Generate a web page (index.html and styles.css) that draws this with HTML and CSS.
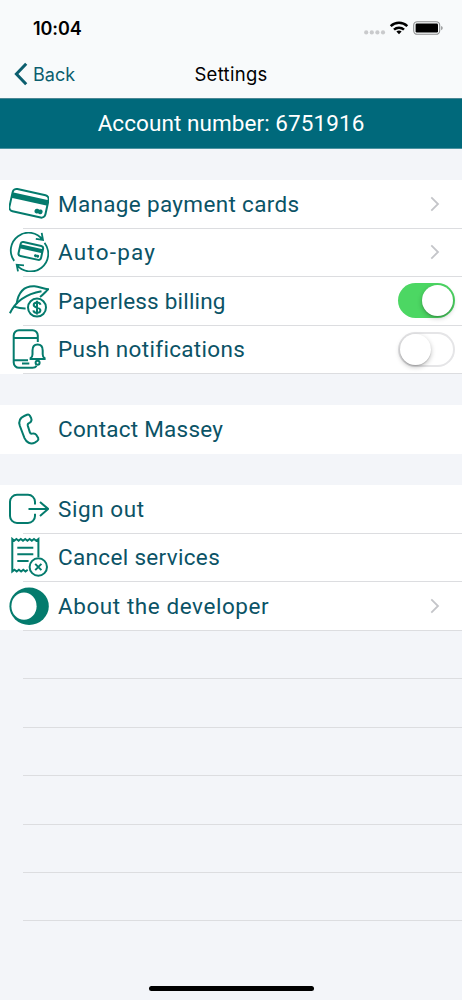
FILE: index.html
```
<!DOCTYPE html>
<html lang="en">

<head>
    <meta charset="UTF-8">
    <meta name="viewport" content="width=device-width, initial-scale=1.0">
    <title>Settings</title>
    <link rel="stylesheet" href="styles.css">
</head>

<body>
    <div class="screen">
        <header class="header">
            <div class="status">
                <span class="time">10:04</span>
                <svg class="status-icons" width="80" height="16" viewBox="0 0 80 16">
                    <g fill="#c9cacc">
                        <circle cx="3.2" cy="12.4" r="2.1" />
                        <circle cx="8.8" cy="12.4" r="2.1" />
                        <circle cx="14.4" cy="12.4" r="2.1" />
                        <circle cx="20" cy="12.4" r="2.1" />
                    </g>
                    <g fill="none" stroke="#000" stroke-width="2.5">
                        <path d="M27.7 6.1a12.1 12.1 0 0 1 16.6 0" />
                        <path d="M31 9.7a7.3 7.3 0 0 1 10 0" />
                    </g>
                    <path d="M36 14.2l-2.6-2.6a3.8 3.8 0 0 1 5.2 0z" />
                    <rect x="50.7" y="1.7" width="26" height="12.6" rx="3.6" fill="none" stroke="#8d8f90" stroke-width="1.1" />
                    <rect x="52.6" y="3.5" width="22.4" height="9" rx="1.2" />
                    <path d="M78.2 6v4.2q1.5-.7 1.5-2.1T78.2 6z" fill="#8d8f90" />
                </svg>
            </div>
            <nav class="nav">
                <a class="back">
                    <svg width="14" height="24" viewBox="0 0 14 24"><path d="M12.2 1.8L2.4 12l9.8 10.2" /></svg>
                    <span>Back</span>
                </a>
                <h1>Settings</h1>
            </nav>
        </header>

        <div class="account">Account number: 6751916</div>

        <main>
            <ul class="group">
                <li class="row">
                    <svg class="icon" viewBox="0 0 40 40">
                        <g transform="rotate(12.5 20 19.3)">
                            <rect x="1.6" y="7.9" width="36.8" height="22.8" rx="4" />
                            <path class="solid" d="M1.5 12.200h37v5.600h-37z" />
                            <circle class="solid" cx="29.400" cy="25.200" r="2.400" />
                            <circle class="solid" cx="32.800" cy="25.200" r="2.400" />
                        </g>
                    </svg>
                    <span class="label cards">Manage payment cards</span>
                    <svg class="chevron" viewBox="0 0 10 16"><path d="M1.3 1.3L8 8l-6.7 6.7" /></svg>
                </li>
                <li class="row">
                    <svg class="icon" viewBox="0 0 40 40">
                        <path class="thin" d="M5.200 28.900A17.500 17.500 0 0 1 33.800 8M32.700.8L34 8l-7.200-1.100M35.500 10.900A17.500 17.500 0 0 1 7.700 32.700M9 39.400l-1.300-6.700 7.300.7" />
                        <g transform="rotate(12.5 21.5 19)">
                            <rect x="10.3" y="11.8" width="23" height="14.2" rx="2.4" />
                            <path class="solid" d="M10.3 14.600h23v4h-23z" />
                            <circle class="solid" cx="27.4" cy="22.500" r="1.500" />
                            <circle class="solid" cx="29.600" cy="22.500" r="1.500" />
                        </g>
                    </svg>
                    <span class="label autopay">Auto-pay</span>
                    <svg class="chevron" viewBox="0 0 10 16"><path d="M1.3 1.3L8 8l-6.7 6.7" /></svg>
                </li>
                <li class="row">
                    <svg class="icon" viewBox="0 0 40 40">
                        <path d="M.9 32.2C6 21.5 17 13 32.500 10.200" />
                        <path d="M7.600 22.800C9.500 10.500 15.500 4.800 25.500 5.300c5 .2 8.500 2.700 13.700 3-2.700 2.500-5 5.500-8.200 7.700M5.200 25.600c3.800 1.200 7.300 1.900 11.400 1.800" />
                        <circle cx="28" cy="26.600" r="9" />
                        <path d="M31.500 23.700c-.4-1.600-1.800-2.200-3.500-2.200-2 0-3.300 1-3.300 2.500 0 3.400 6.700 1.800 6.700 5.200 0 1.700-1.500 2.600-3.400 2.600-2 0-3.400-.9-3.600-2.500M28 19.700v13.800" />
                    </svg>
                    <span class="label paperless">Paperless billing</span>
                    <span class="switch on"></span>
                </li>
                <li class="row">
                    <svg class="icon" viewBox="0 0 40 40">
                        <path d="M28.800 13V6.500a5.300 5.300 0 0 0-5.300-5.300H10a5.300 5.300 0 0 0-5.300 5.300v27A5.300 5.300 0 0 0 10 38.800h13.500c1.700 0 3.200-.7 4.100-1.900M4.700 8.900h24.100M4.700 31.200H19M13 34.500h7.300" />
                        <path d="M21.600 30v-.8c1.500-.8 1.900-2 1.900-4v-3.700c0-3.700 1.900-5.900 5.100-5.900s5.100 2.200 5.100 5.900v3.700c0 2 .4 3.200 1.900 4v.8z" />
                        <circle cx="28.600" cy="33.800" r="2" />
                    </svg>
                    <span class="label push">Push notifications</span>
                    <span class="switch"></span>
                </li>
            </ul>

            <ul class="group">
                <li class="row">
                    <svg class="icon" viewBox="0 0 40 40">
                        <path d="M15.200 7L18 5.800q1.900-.7 2.900.9l1.200 2.200q.8 1.600 0 3.400-.4 1-1.800 1.600-2 .8-1.500 2.900l2 6.300q.6 1.900 2.400 1.500 2.700-.7 4 1.200l2 3.200q.7 1.700-1 3l-2.400 1.600c-4.300 2.300-8.500-.4-10.300-4.500L10.900 17c-1.500-4.500.3-8.300 4.300-10z" />
                    </svg>
                    <span class="label contact">Contact Massey</span>
                </li>
            </ul>

            <ul class="group">
                <li class="row">
                    <svg class="icon" viewBox="0 0 40 40">
                        <path d="M26 15.500v-2.700a7 7 0 0 0-7-7H8a7 7 0 0 0-7 7v14.100a7 7 0 0 0 7 7h11a7 7 0 0 0 7-7v-2.200M19.500 19.900h19.600M31 12.900l8.100 7-8.100 7" />
                    </svg>
                    <span class="label signout">Sign out</span>
                </li>
                <li class="row">
                    <svg class="icon" viewBox="0 0 40 40">
                        <path d="M29.400 20V2l-2.200 1.700L25 2l-2.200 1.700L20.600 2l-2.200 1.700L16.200 2 14 3.700 11.800 2 9.600 3.700 7.400 2 5.200 3.700 3.300 2v32.500l2.200-1.700 2.200 1.700 2.200-1.700 2.200 1.700 2.200-1.700 2.200 1.700 2.200-1.700" />
                        <path d="M8.300 10.700h16M8.300 17.300h16M8.300 24h11.300" />
                        <circle cx="29.300" cy="30" r="8.700" />
                        <path d="M26.200 26.900l6.200 6.200M32.400 26.900l-6.200 6.200" />
                    </svg>
                    <span class="label cancel">Cancel services</span>
                </li>
                <li class="row">
                    <svg class="icon" viewBox="0 0 40 40">
                        <ellipse class="solid" cx="20.100" cy="20.200" rx="19.700" ry="18.700" />
                        <ellipse class="hole" cx="15" cy="20.200" rx="12.600" ry="13.600" />
                    </svg>
                    <span class="label about">About the developer</span>
                    <svg class="chevron" viewBox="0 0 10 16"><path d="M1.3 1.3L8 8l-6.7 6.7" /></svg>
                </li>
                <!-- empty rows -->
                <li class="row empty"></li>
                <li class="row empty"></li>
                <li class="row empty"></li>
                <li class="row empty"></li>
                <li class="row empty"></li>
                <li class="row empty"></li>
            </ul>
        </main>

        <div class="home-bar"></div>
    </div>
</body>

</html>
```
FILE: styles.css
```
* {
    box-sizing: border-box;
}

body {
    margin: 0;
    background: #f3f5f9;
    font-family: Roboto, "Liberation Sans", sans-serif;
    color: #0b5366;
}

.screen {
    display: flex;
    flex-direction: column;
    height: 1000px;
    overflow: hidden;
}

.header {
    height: 98px;
    background: #f8fafb;
    font-family: Inter, "Liberation Sans", sans-serif;
}

.status {
    display: flex;
    justify-content: space-between;
    align-items: center;
    height: 50px;
    padding: 6px 19px 0 33px;
    color: #000;
}

.time {
    font-size: 18px;
    font-weight: 600;
    letter-spacing: -0.1px;
}

.nav {
    display: grid;
    grid-template-columns: 1fr auto 1fr;
    align-items: center;
    height: 48px;
    padding: 0 14px;
}

.back {
    display: flex;
    align-items: center;
    gap: 5px;
    font-size: 18px;
    color: #0b5e6e;
}

.back svg {
    fill: none;
    stroke: #0b5e6e;
    stroke-width: 3;
}

h1 {
    margin: 0;
    font-size: 18.5px;
    font-weight: 400;
    letter-spacing: 0.3px;
    color: #000;
}

.account {
    height: 51px;
    border-top: 1px solid #4b8794;
    border-bottom: 1px solid #4b93a1;
    background: #00697b;
    color: #fff;
    font-size: 22.5px;
    line-height: 49px;
    text-align: center;
    letter-spacing: 0.07px;
}

main {
    display: flex;
    flex-direction: column;
    gap: 31.4px;
    padding-top: 31px;
}

.group {
    margin: 0;
    padding: 0;
    list-style: none;
}

.row {
    position: relative;
    display: flex;
    align-items: center;
    height: 48.45px;
    padding: 0 7px 0.6px 9px;
    background: #fff;
}

.row::after {
    content: "";
    position: absolute;
    z-index: 1;
    left: 23px;
    right: 0;
    bottom: -0.5px;
    height: 1px;
    background: #dcdde0;
}

.group:nth-child(2) .row::after {
    display: none;
}

.row.empty {
    background: none;
}

.icon {
    flex: none;
    width: 40px;
    height: 40px;
    fill: none;
    stroke: #047b6d;
    stroke-width: 2;
}

.icon .thin {
    stroke-width: 1.8;
}

.icon .solid {
    fill: #047b6d;
    stroke: none;
}

.icon .hole {
    fill: #fff;
    stroke: none;
}

.label {
    flex: 1;
    padding-left: 9px;
    font-size: 22.5px;
    white-space: nowrap;
    letter-spacing: 0.33px;
}

.autopay {
    letter-spacing: 1.2px;
}

.paperless {
    letter-spacing: 0.2px;
}

.contact {
    letter-spacing: 0.25px;
}

.signout,
.about {
    letter-spacing: 0.57px;
}

.chevron {
    width: 10px;
    height: 16px;
    margin-right: 15px;
    fill: none;
    stroke: #c4c5c9;
    stroke-width: 1.8;
}

.switch {
    display: flex;
    width: 57px;
    height: 35px;
    padding: 2px;
    border-radius: 18px;
    box-shadow: inset 0 0 0 2px #e5e5e7;
}

.switch::before {
    content: "";
    width: 31px;
    height: 31px;
    border-radius: 50%;
    background: #fff;
    box-shadow: 0 2px 5px rgba(0, 0, 0, 0.25), 0 1px 1px rgba(0, 0, 0, 0.15);
}

.switch.on {
    justify-content: flex-end;
    background: #4cd763;
    box-shadow: none;
}

.home-bar {
    width: 165px;
    height: 5px;
    margin: auto auto 9px;
    border-radius: 3px;
    background: #000;
}
```
